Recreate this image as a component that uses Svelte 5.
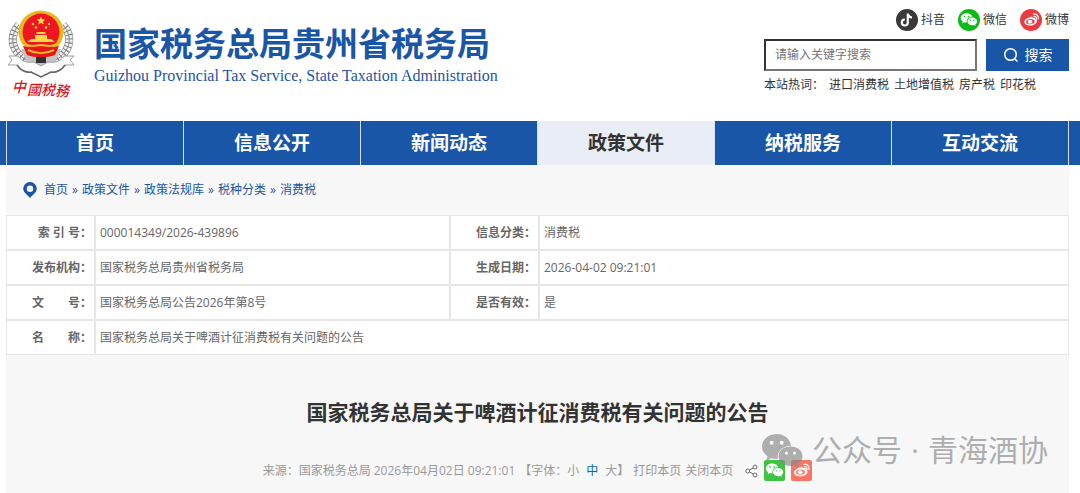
<script>
	const navItems = ['首页', '信息公开', '新闻动态', '政策文件', '纳税服务', '互动交流'];
	const crumbs = ['首页', '政策文件', '政策法规库', '税种分类', '消费税'];
	const hotWords = ['进口消费税', '土地增值税', '房产税', '印花税'];
	const rows = [
		['索 引 号：', '000014349/2026-439896', '信息分类：', '消费税'],
		['发布机构：', '国家税务总局贵州省税务局', '生成日期：', '2026-04-02 09:21:01'],
		['文　　号：', '国家税务总局公告2026年第8号', '是否有效：', '是']
	];
	const sizes = ['小', '中', '大'];

	let active = $state('政策文件');
	let fontSize = $state('中');
	let keyword = $state('');
</script>

{#snippet wechat()}
	<path
		fill-rule="evenodd"
		d="M9.2 4.5C5.6 4.5 2.8 6.8 2.8 9.7c0 1.7.9 3.1 2.4 4.1l-.7 2 2.4-1.2c.8.2 1.5.3 2.3.3h.5c-.9-3.5 2-6.4 6-6.4C15.2 6.1 12.5 4.5 9.2 4.5zM7 7.2a.9.9 0 1 1 0 1.8.9.9 0 0 1 0-1.8zm4.4 0a.9.9 0 1 1 0 1.8.9.9 0 0 1 0-1.8z"
	/>
	<path
		fill-rule="evenodd"
		d="M15.6 9.3c-3 0-5.3 1.9-5.3 4.3s2.3 4.3 5.3 4.3c.7 0 1.3-.1 1.9-.3l1.9 1-.5-1.7c1.3-.8 2.1-2 2.1-3.3 0-2.4-2.4-4.3-5.4-4.3zm-1.8 2.2a.75.75 0 1 1 0 1.5.75.75 0 0 1 0-1.5zm3.6 0a.75.75 0 1 1 0 1.5.75.75 0 0 1 0-1.5z"
	/>
{/snippet}

{#snippet weibo()}
	<path
		fill-rule="evenodd"
		d="M9.8 8.1c1.6-.9 3-.6 2.7.9 1.7-.6 3.3-.3 2.9 1.2 1.5.4 2.2 1.4 1.9 2.7-.5 2.5-3.6 4.3-7.2 4.3-3.7 0-6.5-1.7-6.5-4.2 0-1.8 3-4.4 6.2-4.9zM10 10.2c-2.7.2-4.6 1.5-4.5 3.1.1 1.6 2.2 2.7 4.900 2.500 2.700-.2 4.700-1.600 4.600-3.200-.2-1.500-2.300-2.600-5-2.400z"
	/>
	<ellipse cx="9.8" cy="13.1" rx="2.6" ry="2.2" />
	<path
		d="M14 7.3c1.7-.3 3 .9 2.7 2.7M13.7 4.9c3.2-.6 5.7 1.8 5.1 5.2"
		fill="none"
		stroke="#fff"
		stroke-width="1.3"
		stroke-linecap="round"
	/>
{/snippet}

<header class="header">
	<a class="brand" href="/">
		<svg class="emblem" viewBox="0 0 70 92" width="70" height="92" aria-hidden="true">
			<g fill="none" stroke="#777">
				<path d="M12 16C1 28 4 45 25 54" stroke-width="8" />
				<path d="M56 16C67 28 64 45 43 54" stroke-width="8" />
				<g stroke="#eee" stroke-width="7" stroke-dasharray="3 1">
					<path d="M12 16C1 28 4 45 25 54" />
					<path d="M56 16C67 28 64 45 43 54" />
				</g>
				<g stroke="#888" stroke-width="1">
					<path d="M12 16C1 28 4 45 25 54" />
					<path d="M56 16C67 28 64 45 43 54" />
				</g>
			</g>
			<path d="M14 40h40l-8 18H22z" fill="#c4c4c4" />
			<path d="M29 46h10v8H29z" fill="#333" />
			<path
				d="M2 47l9 0c4 6 10 7 16 6l7 4 7-4c6 1 12 0 16-6h10l-4 4 4 5h-9c-3 5-9 8-14 7l-10 5-10-5c-5 1-11-2-14-7H1l4-5z"
				fill="#fbfbfb"
				stroke="#a0a0a0"
			/>
			<path d="M10 56c3 5 9 8 14 7l10 5 10-5c5 1 11-2 14-7" fill="none" stroke="#666" stroke-width="1.5" />
			<ellipse cx="34" cy="23" rx="22.5" ry="21.5" fill="#e9b91b" />
			<ellipse cx="34" cy="23" rx="18.5" ry="18.5" fill="#ee1620" />
			<path
				d="M34 7.5l1.3 2.8 3 .3-2.3 2 .7 3-2.7-1.6-2.700 1.600.7-3-2.300-2 3-.3z"
				fill="#ffd84a"
			/>
			<g fill="#ffd84a">
				<circle cx="26" cy="15" r="1.2" />
				<circle cx="42" cy="15" r="1.2" />
				<circle cx="29" cy="18.500" r="1.2" />
				<circle cx="39" cy="18.500" r="1.2" />
				<path d="M29 25l1-2h8l1 2zM28 26h12v4H28zM20 33l4-3h20l4 3z" />
			</g>
			<path d="M16 37c7 2 11 0 18 2 7-2 11 0 18-2l-4 9c-8 3-20 3-28 0z" fill="#e5151b" />
			<g fill="none" stroke="#efc023" stroke-width="2">
				<path d="M18 35c7 4 11 1 16 1s9 3 16-1" />
				<path d="M21 41c8 4 18 4 26 0" />
			</g>
			<text class="script" x="5" y="83">中</text>
			<text class="script" x="20" y="86">國</text>
			<text class="script" x="34" y="86">税</text>
			<text class="script" x="48" y="87">務</text>
		</svg>
		<span class="brand-text">
			<strong>国家税务总局贵州省税务局</strong>
			<span class="english" lang="en">Guizhou Provincial Tax Service, State Taxation Administration</span>
		</span>
	</a>

	<div class="tools">
		<div class="social">
			<a href="#douyin">
				<svg viewBox="0 0 22 22" width="22" height="22" aria-hidden="true">
					<circle cx="11" cy="11" r="11" fill="#393939" />
					<path
						d="M11.8 4.5v9a3 3 0 1 1-3-3M11.8 5c.3 2 1.7 3.3 4.2 3.5"
						fill="none"
						stroke="#fff"
						stroke-width="2.2"
					/>
				</svg>
				抖音
			</a>
			<a href="#wechat">
				<svg viewBox="0 0 22 22" width="22" height="22" fill="#fff" aria-hidden="true">
					<circle cx="11" cy="11" r="11" fill="#0abb17" />
					<g transform="translate(.2 .2) scale(.9)">{@render wechat()}</g>
				</svg>
				微信
			</a>
			<a href="#weibo">
				<svg viewBox="0 0 22 22" width="22" height="22" fill="#fff" aria-hidden="true">
					<circle cx="11" cy="11" r="11" fill="#e93b42" />
					<g transform="translate(1 .7) scale(.92)">{@render weibo()}</g>
				</svg>
				微博
			</a>
		</div>
		<form class="search" onsubmit={(e) => e.preventDefault()}>
			<input
				type="text"
				placeholder="请输入关键字搜索"
				aria-label="请输入关键字搜索"
				bind:value={keyword}
			/>
			<button type="submit">
				<svg viewBox="0 0 16 16" width="16" height="16" aria-hidden="true">
					<circle cx="7.5" cy="7.5" r="5.8" />
					<path d="M11.6 11.6L14.5 14.5" />
				</svg>
				搜索
			</button>
		</form>
		<div class="hot">
			<span>本站热词：</span>
			{#each hotWords as word}
				<a href="#hot">{word}</a>
			{/each}
		</div>
	</div>
</header>

<nav class="nav">
	<ul>
		{#each navItems as item}
			<li>
				<a href="#nav" class:active={active === item} onclick={() => (active = item)}>{item}</a>
			</li>
		{/each}
	</ul>
</nav>

<main class="content">
	<div class="crumbs">
		<svg viewBox="0 0 14 16" width="14" height="16" aria-hidden="true">
			<path
				fill-rule="evenodd"
				d="M7 0a6.8 6.8 0 0 1 6.8 6.8C13.8 10.5 9.5 13 7 16 4.5 13 .2 10.5.2 6.8A6.8 6.8 0 0 1 7 0zm0 3.5a3.2 3.2 0 1 0 0 6.4 3.2 3.2 0 0 0 0-6.4z"
			/>
		</svg>
		<div class="trail">
			{#each crumbs as crumb, i}
				{#if i}<span>»</span>{/if}
				<a href="#crumb">{crumb}</a>
			{/each}
		</div>
	</div>

	<table>
		<colgroup>
			<col class="label" />
			<col class="first" />
			<col class="label" />
			<col />
		</colgroup>
		<tbody>
			{#each rows as [label, value, label2, value2]}
				<tr>
					<th scope="row">{label}</th>
					<td>{value}</td>
					<th scope="row">{label2}</th>
					<td>{value2}</td>
				</tr>
			{/each}
			<tr>
				<th scope="row">名　　称：</th>
				<td colspan="3">国家税务总局关于啤酒计征消费税有关问题的公告</td>
			</tr>
		</tbody>
	</table>

	<h1>国家税务总局关于啤酒计征消费税有关问题的公告</h1>

	<div class="meta">
		<span>来源：国家税务总局 2026年04月02日 09:21:01</span>
		<span class="sizes">
			【字体：{#each sizes as size}<button
					type="button"
					class:current={fontSize === size}
					onclick={() => (fontSize = size)}>{size}</button
				>{/each}】
		</span>
		<button type="button" onclick={() => window.print()}>打印本页</button>
		<button type="button" onclick={() => window.close()}>关闭本页</button>
		<div class="share">
			<svg viewBox="0 0 13 14" width="13" height="14" aria-hidden="true">
				<rect width="13" height="14" fill="#fff" />
				<g fill="none" stroke="#666">
					<circle cx="2.8" cy="7" r="2" />
					<circle cx="10" cy="3" r="2" />
					<circle cx="10" cy="11" r="2" />
					<path d="M4.6 6l3.6-2M4.6 8l3.6 2" />
				</g>
			</svg>
			<a href="#share-wechat" aria-label="微信">
				<svg viewBox="0 0 21 21" width="21" height="21" fill="#fff" aria-hidden="true">
					<rect width="21" height="21" rx="2" fill="#3ec443" />
					<g transform="translate(-.7 -.8) scale(.95)">{@render wechat()}</g>
				</svg>
			</a>
			<a href="#share-weibo" aria-label="微博">
				<svg viewBox="0 0 21 21" width="21" height="21" fill="#fff" aria-hidden="true">
					<rect width="21" height="21" rx="2" fill="#fa7564" />
					<g transform="translate(-.5 -.5) scale(.98)">{@render weibo()}</g>
				</svg>
			</a>
		</div>
	</div>

	<div class="watermark">
		<svg viewBox="0 0 41 33" width="41" height="33" aria-hidden="true">
			<path
				fill-rule="evenodd"
				d="M15 0C6.5 0 0 5.5 0 12.5c0 4 2 7.5 5.5 9.7L4.2 27l5.2-2.8c2 .6 4 .8 6.3.8-1-7.500 5-13 13.300-13.200C28 5 22.500 0 15 0zM9.700 6.700a2 2 0 1 1 0 4 2 2 0 0 1 0-4zm10 0a2 2 0 1 1 0 4 2 2 0 0 1 0-4z"
			/>
			<path
				fill-rule="evenodd"
				d="M28.5 12.5c-6.7 0-12 4.2-12 9.7s5.3 9.7 12 9.7c1.5 0 3-.2 4.300-.6l4.200 1.700-1-3.400c2.800-1.800 4.500-4.400 4.500-7.400 0-5.500-5.300-9.700-12-9.700zm-4 5a1.600 1.600 0 1 1 0 3.200 1.600 1.600 0 0 1 0-3.200zm8 0a1.600 1.600 0 1 1 0 3.200 1.600 1.600 0 0 1 0-3.200z"
			/>
		</svg>
		<span>公众号</span>
		<span>·</span>
		<span>青海酒协</span>
	</div>
</main>

<style>
	:global(body) {
		background-color: #fff;
		color: #333;
		font-family: 'Open Sans', 'Noto Sans CJK SC', sans-serif;
		font-size: 12px;
		line-height: 18px;
	}

	a {
		color: inherit;
		text-decoration: none;
	}

	svg {
		display: block;
		flex: none;
	}

	button,
	input {
		font: inherit;
	}

	.header {
		display: flex;
		justify-content: space-between;
		align-items: flex-start;
		padding: 9px 11px 20px 7px;
	}

	.brand {
		display: flex;
		gap: 17px;
		color: #1a56a8;
	}

	.script {
		font-size: 14px;
		font-style: italic;
		font-weight: 500;
		fill: #d9161c;
	}

	.brand-text {
		display: flex;
		flex-direction: column;
		padding-top: 14px;
		white-space: nowrap;
	}

	.brand-text strong {
		font-size: 33px;
		line-height: 42px;
	}

	.english {
		font-family: 'Liberation Serif', serif;
		font-size: 16px;
		line-height: 22px;
	}

	.tools {
		display: flex;
		flex-direction: column;
		width: 305px;
	}

	.social {
		display: flex;
		justify-content: flex-end;
		gap: 13px;
	}

	.social a {
		display: flex;
		align-items: center;
		gap: 3px;
	}

	.search {
		display: flex;
		gap: 9px;
		height: 32px;
		margin-top: 8px;
	}

	.search input {
		flex: 1;
		min-width: 0;
		box-sizing: border-box;
		padding: 0 9px;
		border: 2px solid;
		border-color: #333 #767676 #767676 #333;
		background-color: #fff;
		color: #333;
	}

	.search input::placeholder {
		color: #757575;
	}

	.search button {
		display: flex;
		justify-content: center;
		align-items: center;
		gap: 6px;
		width: 83px;
		padding: 0;
		border: none;
		background-color: #1a56a8;
		color: #fff;
		font-size: 14px;
		cursor: pointer;
	}

	.search button svg {
		fill: none;
		stroke: #fff;
		stroke-width: 1.5;
	}

	.hot {
		display: flex;
		gap: 5px;
		margin-top: 5px;
		white-space: nowrap;
	}

	.nav {
		padding: 0 11px 0 6px;
		background-color: #1a56a8;
	}

	.nav ul {
		display: flex;
		margin: 0;
		padding: 0;
		border-right: 1px solid #d5dfed;
		list-style: none;
	}

	.nav li {
		flex: 1;
		border-left: 1px solid #d5dfed;
	}

	.nav a {
		display: block;
		color: #fff;
		font-size: 19px;
		font-weight: 700;
		line-height: 44px;
		text-align: center;
	}

	.nav a.active {
		background-color: #e8edf6;
		color: #333;
	}

	.content {
		position: relative;
		margin: 0 11px 0 6px;
		padding-bottom: 12px;
		background-color: #f7f7f7;
	}

	.crumbs {
		display: flex;
		align-items: center;
		gap: 7px;
		height: 50px;
		padding-left: 17px;
		color: #1a56a8;
	}

	.crumbs svg {
		fill: #1a56a8;
	}

	.trail {
		display: flex;
		gap: 4px;
	}

	table {
		width: 100%;
		border: 0;
		border-spacing: 0;
		table-layout: fixed;
		background-color: #fff;
		color: #666;
	}

	.label {
		width: 89px;
	}

	.first {
		width: 355px;
	}

	th,
	td {
		box-sizing: border-box;
		height: 35px;
		padding: 0 0 0 4px;
		border: 1px solid #e6e6e6;
		text-align: left;
	}

	th {
		padding: 0 2px 0 0;
		text-align: right;
	}

	h1 {
		margin: 41px 0 0;
		font-size: 21px;
		line-height: 32px;
		text-align: center;
	}

	.meta {
		display: flex;
		justify-content: center;
		align-items: center;
		gap: 4px;
		margin-top: 32px;
		color: #999;
		white-space: nowrap;
	}

	.meta button {
		padding: 0;
		border: none;
		background: none;
		color: inherit;
		cursor: pointer;
	}

	.sizes button {
		margin-right: 7px;
	}

	.sizes button:last-of-type {
		margin-right: 0;
	}

	.meta .current {
		color: #0066cc;
	}

	.share {
		display: flex;
		align-items: center;
		gap: 6px;
		margin-left: 8px;
	}

	/* sits over the share icons */
	.watermark {
		position: absolute;
		right: 21px;
		bottom: 23px;
		display: flex;
		align-items: center;
		gap: 9px;
		color: #888;
		font-size: 30px;
		line-height: 40px;
		opacity: 0.65;
		pointer-events: none;
	}

	.watermark svg {
		fill: #888;
	}
</style>
